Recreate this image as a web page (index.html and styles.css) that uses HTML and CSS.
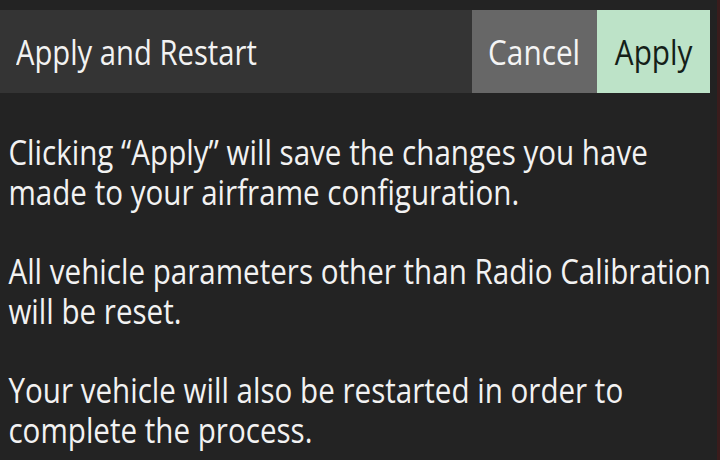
FILE: index.html
```html
<!DOCTYPE html>
<html>
<head>
    <meta charset="utf-8">
    <link rel="stylesheet" href="styles.css">
</head>
<body>
    <main class="window">
        <div class="dialog">
            <div class="dialog-header">
                <div class="dialog-title"><span class="narrow">Apply and Restart</span></div>
                <button class="btn btn-cancel"><span class="narrow">Cancel</span></button>
                <button class="btn btn-apply"><span class="narrow">Apply</span></button>
            </div>
            <div class="dialog-body">
                <p>Clicking “Apply” will save the changes you have<br>made to your airframe configuration.</p>
                <p>All vehicle parameters other than Radio Calibration<br>will be reset.</p>
                <p>Your vehicle will also be restarted in order to<br>complete the process.</p>
            </div>
        </div>
    </main>
</body>
</html>
```

FILE: styles.css
```css
* {
    box-sizing: border-box;
}
html, body {
    margin: 0;
    width: 720px;
    height: 460px;
    overflow: hidden;
    background: #222222;
}
.window {
    display: flex;
    height: 460px;
    border-right: 3px solid #3a1c1c;
}
.dialog {
    flex: 1;
    min-width: 0;
    margin-right: 7px;
    padding-top: 10px;
    background: #232323;
    font-family: "Open Sans", sans-serif;
    color: #f2f2f2;
}
.dialog-header {
    display: flex;
    align-items: stretch;
    height: 83px;
    background: #343434;
}
.narrow {
    display: inline-block;
    transform: scaleX(0.85);
    white-space: nowrap;
}
.dialog-title {
    flex: 1;
    min-width: 0;
    display: flex;
    align-items: center;
    padding-left: 16px;
    font-size: 35px;
}
.dialog-title .narrow {
    transform: scaleX(0.835);
    transform-origin: left center;
}
.btn {
    flex-shrink: 0;
    border: none;
    padding: 0;
    margin: 0;
    font-family: "Open Sans", sans-serif;
    font-size: 35px;
}
.btn-cancel {
    width: 125px;
    background: #676767;
    color: #f4f4f4;
}
.btn-apply {
    width: 113px;
    background: #bde3c8;
    color: #142018;
}
.dialog-body {
    padding: 39px 0 0 10px;
    font-size: 35px;
    line-height: 40px;
    white-space: nowrap;
    transform: scaleX(0.845);
    transform-origin: left top;
}
.dialog-body p {
    margin: 0 0 39px 0;
}
```
